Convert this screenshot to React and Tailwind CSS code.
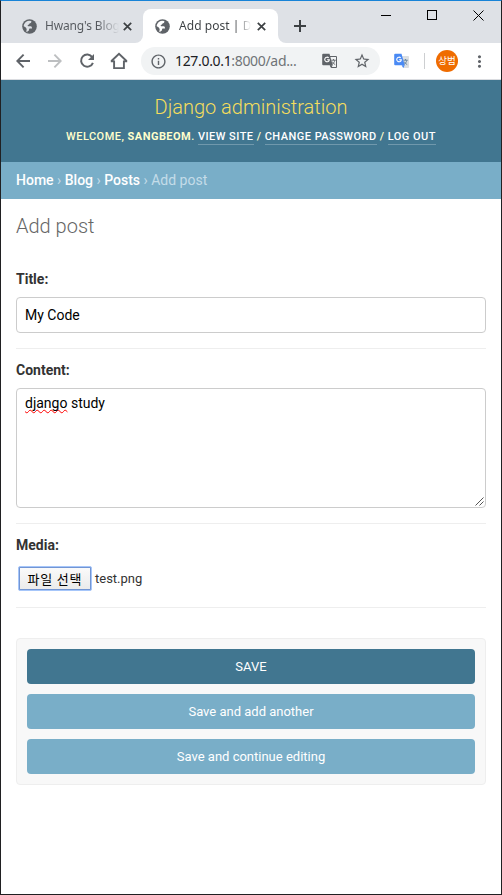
import React from "react";
import { MdInfoOutline, MdStarBorder, MdMoreVert } from "react-icons/md";

function GlobeIcon({ land }) {
  return (
    <svg className="block size-[15px] shrink-0" viewBox="0 0 15 15">
      <circle cx="7.5" cy="7.5" r="7.3" fill="#5f6368" />
      <path d="M1.700 7.300C1.800 4.400 4 2 7 1.700L9.300 2.100c.2 1.100-.2 1.900-1.200 2.200-1 .2-.8 1.300-1.700 1.500-.9.200-.9 1.100-.3 1.500h2.600c1.100 0 1.300 1.200 1.300 2.100h-2c-.8 0-1 .7-1 1.400 0 1-.6 1.300-1.500 1.300v1.100C3.300 12.600 5 11.500 4.600 9.900 4.200 8.500 3 7.800 1.700 7.300z" fill={land} />
      <path d="M11.500 3.100c1.300 1.100 2 2.800 1.900 4.700-.1 2.500-1.700 4.600-4 5.400.1-1 .3-1.700 1.200-2 .9-.3 1.200-1.100.9-2.100-.3-1.200-1.300-1-1.500-2.100-.2-1.100.4-1.800 1.300-2.300z" fill="#5f6368" />
    </svg>
  );
}

function CloseIcon() {
  return (
    <svg className="block size-[9px] shrink-0" viewBox="0 0 9 9" fill="none" stroke="#3c4043" strokeWidth="1.7">
      <path d="M.8.8l7.400 7.400M8.200.8L.8 8.200" />
    </svg>
  );
}

function TranslateIcon({ back, front, edge, glyph }) {
  return (
    <svg className="block h-4 w-4 shrink-0" viewBox="0 0 16 16">
      <path d="M7 3.5h7.5v11H9.2z" fill={front} stroke={edge} strokeWidth="1" />
      <path d="M9.3 7.2h4.4M11.5 6v1.2M12.9 7.2c-.5 2-1.6 3.4-3 4.3M10.2 8.6c.7 1.4 1.7 2.4 3 3" fill="none" stroke={glyph} strokeWidth="0.9" />
      <path d="M1.2.8h6.3l3.2 11.4H1.2A1 1 0 0 1 .2 11.200V1.800a1 1 0 0 1 1-1z" fill={back} />
      <path d="M7.600 12.200h3.100L9.300 15z" fill={back} />
      <path d="M6.700 4.900a2.300 2.300 0 1 0 .6 1.900H5.100" fill="none" stroke="#fff" strokeWidth="1.100" />
    </svg>
  );
}

function TabTitle({ title, className }) {
  return (
    <div className={"whitespace-nowrap bg-clip-text font-['Noto_Sans',sans-serif] text-[12px] leading-4 text-transparent " + className}>
      {title}
    </div>
  );
}

function TabStrip() {
  return (
    <div className="flex h-[42px] bg-[#dee1e6] text-[#5f6368]">
      <div className="flex h-full w-[134px] items-center pt-[8px] pl-[21px]">
        <GlobeIcon land="#dee1e6" />
        <TabTitle title="Hwang's Blog" className="ml-[8px] w-[74px] tracking-[-0.15px] bg-linear-to-r from-[#54585d] from-70% to-[#54585d]/0" />
        <div className="ml-[4px]"><CloseIcon /></div>
      </div>
      <div className="flex items-end">
        <div className="size-2 bg-white"><div className="size-2 rounded-br-lg bg-[#dee1e6]" /></div>
        <div className="flex h-[34px] w-[135px] items-center rounded-t-lg bg-white pl-[12px]">
          <GlobeIcon land="#ffffff" />
          <TabTitle title="Add post | D" className="ml-[9px] w-[72px] tracking-[0.05px] bg-linear-to-r from-[#3c4043] from-78% to-[#3c4043]/0" />
          <div className="ml-[6px]"><CloseIcon /></div>
        </div>
        <div className="size-2 bg-white"><div className="size-2 rounded-bl-lg bg-[#dee1e6]" /></div>
      </div>
      <div className="flex h-full items-center pt-[8px] pl-[8px]">
        <svg className="size-3" viewBox="0 0 12 12" stroke="#3c4043" strokeWidth="2"><path d="M0 6h12M6 0v12" /></svg>
      </div>
      <div className="ml-auto flex h-[28px] items-center gap-[36px] pr-[17px]">
        <div className="h-px w-[10px] bg-black" />
        <div className="size-[10px] border border-black" />
        <svg className="size-[11px]" viewBox="0 0 11 11" stroke="#000" strokeWidth="1"><path d="M.5.5l10 10M10.500.5l-10 10" /></svg>
      </div>
    </div>
  );
}

function ArrowIcon({ className }) {
  return (
    <svg className={"block size-[14px] shrink-0 " + className} viewBox="0 0 14 14" fill="none" stroke="currentColor" strokeWidth="1.9">
      <path d="M14 7H1.500M7.600.7L1.300 7l6.300 6.300" />
    </svg>
  );
}

function Toolbar() {
  return (
    <div className="flex h-[37px] items-center border-b border-[#dadce0] bg-white text-[#5f6368]">
      <ArrowIcon className="ml-[15px]" />
      <ArrowIcon className="ml-[18px] rotate-180 text-[#bdbfc1]" />
      <svg className="ml-[17px] block size-[16px] shrink-0" viewBox="0 0 16 16">
        <path d="M13.200 4.100A6.100 6.100 0 1 0 13.900 9.800" fill="none" stroke="currentColor" strokeWidth="2" />
        <path d="M15 1v6H9z" fill="currentColor" />
      </svg>
      <svg className="ml-[15px] block size-[18px] shrink-0" viewBox="0 0 18 18" fill="none" stroke="currentColor" strokeWidth="1.900">
        <path d="M1.200 9.300L9 1.800l7.800 7.500M.8 9.400h3.300v6.700h9.800V9.400h3.300" />
      </svg>
      <div className="ml-[13px] flex h-7 w-[239px] shrink-0 items-center rounded-full bg-[#f1f3f4]">
        <MdInfoOutline className="ml-[9px] size-[17px] shrink-0" />
        <div className="ml-[8px] w-[147px] shrink-0 whitespace-nowrap font-['Noto_Sans',sans-serif] text-[14px] leading-5 tracking-[-0.33px] text-[#202124]">
          127.0.0.1<span className="text-[#6f7377]">:8000/ad...</span>
        </div>
        <TranslateIcon back="#5f6368" front="#f1f3f4" edge="#5f6368" glyph="#5f6368" />
        <MdStarBorder className="ml-[15px] size-[18px] shrink-0" />
      </div>
      <div className="ml-[14px]"><TranslateIcon back="#4a8af4" front="#dcdfe2" edge="#dcdfe2" glyph="#5f7f98" /></div>
      <div className="ml-[14px] h-4 w-px bg-[#cdcfd1]" />
      <div className="ml-[11px] flex size-[22px] shrink-0 items-center justify-center rounded-full bg-[#ef6c00] font-['Noto_Sans_CJK_KR',sans-serif] text-[9.5px] leading-none whitespace-nowrap text-white">상범</div>
      <MdMoreVert className="ml-[12px] size-[19px] shrink-0" />
    </div>
  );
}

function HeaderLink({ children }) {
  return <a className="border-b border-white/25 pb-px text-white">{children}</a>;
}

export default function App() {
  return (
    <div className="flex h-[895px] w-[502px] flex-col border border-t-[#1883d7] border-r-[#202022] border-b-[#202022] border-l-[#202022] bg-white font-[Roboto,sans-serif] text-[#333]">
      <TabStrip />
      <Toolbar />
      <header className="flex h-[82px] flex-col items-center bg-[#417690] pt-[15px] text-[#ffc]">
        <h1 className="text-[20px] leading-6 font-light text-[#f5dd5d]">Django administration</h1>
        <div className="mt-[10px] text-[11px] leading-[15px] font-medium tracking-[0.47px] whitespace-nowrap uppercase">
          Welcome, <strong className="font-bold">Sangbeom</strong>. <HeaderLink>View site</HeaderLink> / <HeaderLink>Change password</HeaderLink> / <HeaderLink>Log out</HeaderLink>
        </div>
      </header>
      <nav className="h-[37px] bg-[#79aec8] px-[15px] pt-[9px] text-[14px] leading-[18px] text-[#c4dce8]">
        <a className="font-medium text-white">Home</a> › <a className="font-medium text-white">Blog</a> › <a className="font-medium text-white">Posts</a> › Add post
      </nav>
      <main className="flex flex-col px-[15px] pt-[15px]">
        <h2 className="text-[20px] leading-6 font-light text-[#666]">Add post</h2>
        <section className="mt-[31px] flex h-[80px] flex-col border-b border-[#eee] text-[14px]">
          <label className="leading-[20px] font-bold">Title:</label>
          <div className="mt-[8px] flex h-9 items-center rounded-[4px] border border-[#ccc] px-2 text-black">My Code</div>
        </section>
        <section className="flex h-[175px] flex-col border-b border-[#eee] pt-[11px] text-[14px]">
          <label className="leading-[20px] font-bold">Content:</label>
          <div className="mt-[8px] flex h-[120px] items-start justify-between rounded-[4px] border border-[#ccc] pt-[6px] pl-2 leading-[17px] text-black">
            <p><span className="underline decoration-[#f00] decoration-wavy decoration-[1px] underline-offset-[1px] [text-decoration-skip-ink:none]">django</span> study</p>
            <svg className="mr-px mb-px size-[9px] self-end" viewBox="0 0 9 9" stroke="#555" strokeWidth="1"><path d="M.5 8.500l8-8M4.500 8.500l4-4" /></svg>
          </div>
        </section>
        <section className="flex h-[84px] flex-col border-b border-[#eee] pt-[11px] text-[14px]">
          <label className="leading-[20px] font-bold">Media:</label>
          <div className="mt-[11px] flex items-center pl-[2px]">
            <div className="flex h-[25px] w-[74px] items-center justify-center rounded-[2px] border border-[#a6c6fa] bg-[#7295d3] p-px">
              <div className="flex h-full w-full items-center justify-center bg-linear-to-b from-[#fafafa] to-[#ebebeb] pb-px font-['Noto_Sans_CJK_KR',sans-serif] text-[13px] leading-none tracking-[0.8px] whitespace-nowrap text-black">파일 선택</div>
            </div>
            <span className="ml-[3px] text-[13px]">test.png</span>
          </div>
        </section>
        <div className="mt-[30px] flex h-[147px] flex-col gap-[10px] rounded-[4px] border border-[#eee] bg-[#f8f8f8] p-[10px] text-[13px] text-white">
          <button className="h-[35px] rounded-[4px] bg-[#417690]">SAVE</button>
          <button className="h-[35px] rounded-[4px] bg-[#79aec8]">Save and add another</button>
          <button className="h-[35px] rounded-[4px] bg-[#79aec8]">Save and continue editing</button>
        </div>
      </main>
    </div>
  );
}
